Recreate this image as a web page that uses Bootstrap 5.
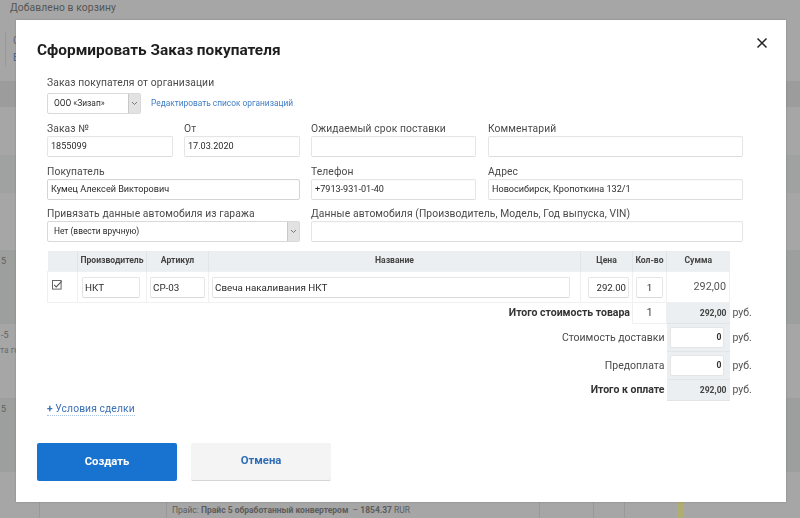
<!DOCTYPE html>
<html lang="ru">
<head>
<meta charset="utf-8">
<title>Сформировать Заказ покупателя</title>
<link href="https://cdn.jsdelivr.net/npm/bootstrap@5.3.0/dist/css/bootstrap.min.css" rel="stylesheet">
<style>
html,body{height:518px;overflow:hidden;}
body{font-family:Roboto,"Liberation Sans",sans-serif;background:#a6a6a6;color:#333;font-size:11px;}
.page-under{height:518px;display:flex;flex-direction:column;color:#555;}
.under-top{height:81px;padding:1px 10px;font-size:10.3px;line-height:14px;letter-spacing:.1px;}
.under-box{margin:17px 0 0 -5px;border-left:1px solid #999;padding-left:7px;height:35px;font-size:10px;line-height:17px;color:#666;}
.under-box span{display:block;}
.under-box .bl{color:#50688a;}
.under-band{flex:0 0 auto;color:#5f5f5f;font-size:9px;line-height:11px;padding:6px 0 0 1px;}
.under-band span{display:block;}
.under-band .sub{font-size:8.5px;margin-top:4px;margin-left:-1px;color:#6a6a6a;}
.b-dark{background:#9c9c9c;}
.b-mid{background:#a0a1a1;}
.b-green{background:#9c9f9e;}
.under-foot{flex:1 1 auto;display:flex;align-items:flex-end;}
.foot-line{display:flex;width:100%;height:16px;font-size:8.5px;line-height:16px;color:#5c5c5c;}
.fc{border-right:1px solid #999;flex:0 0 auto;}
.fy{background:#b0ad70;flex:0 0 7px;}
.overlay{position:fixed;inset:0;padding:20px 14px 16px 16px;}
.order-modal{height:482px;background:#fff;padding:21px 21px 21px;position:relative;border:0;border-radius:0;box-shadow:0 0 2px rgba(0,0,0,.2);}
.order-title{font-size:15.4px;font-weight:700;color:#1e1e1e;line-height:18px;margin:0;}
.close-x{position:absolute;top:17px;right:18px;width:12px;height:12px;padding:0;background:none;border:0;line-height:0;}
.order-form{padding:0 10px;}
.fld-label{display:block;font-size:10.3px;line-height:13px;color:#4a4a4a;letter-spacing:.1px;margin:0 0 1px;}
.fld{display:block;width:100%;height:21px;border:1px solid #e5e5e5;border-bottom-color:#dcdcdc;border-radius:2px;padding:0 3px;font:9.1px/19px Roboto,sans-serif;color:#2b2b2b;background:#fff;box-shadow:inset 0 1px 1px rgba(0,0,0,.02);}
.fld.strong{border-color:#d4d4d4;}
.pick{display:flex;height:21px;border:1px solid #d9d9d9;border-radius:2px;background:#fff;font-size:8.4px;line-height:19px;color:#2b2b2b;padding-left:6px;justify-content:space-between;}
.pick-arrow{width:12px;background:#e2e2e2;border-left:1px solid #c8c8c8;display:flex;align-items:center;justify-content:center;}
.form-grid{display:grid;grid-template-columns:126px 11px 116px 11px 165px 12px 255px;margin-top:8px;}
.g-2{grid-column:1/span 3}
.g-c1{grid-column:1}.g-c3{grid-column:3}.g-c5{grid-column:5}.g-c7{grid-column:7}
.g-wide{grid-column:5/span 3}
.grow{margin-bottom:7.5px;}
.org-head{padding-top:17px;}
.org-row{display:flex;align-items:center;gap:10px;}
.org-pick{width:94px;}
.org-link{font-size:8.35px;color:#3f7cc4;text-decoration:none;}
.items{table-layout:fixed;border-collapse:collapse;width:705px;margin:1px 0 0;}
.items th{background:#eceff1;height:21px;font-size:8.6px;font-weight:700;text-align:center;color:#444;padding:0;border-left:1px solid #e2e5e7;}
.items th:first-child{border-left:0;}
.items td{padding:0;font-size:10.5px;color:#4a4a4a;vertical-align:middle;}
.items .itm td{height:31px;border:1px solid #eef0f1;}
.cellin{display:block;height:21px;border:1px solid #e5e5e5;border-bottom-color:#d8d8d8;border-radius:2px;font-size:9.8px;line-height:19px;color:#2b2b2b;padding:0 2px;margin:0 3px;background:#fff;}
.m-maker{margin:0 6px 0 4px;}
.m-name{margin:0 10px 0 3px;}
.cellin.m-price{margin:0 3px 0 7px;font-size:9.6px;}
.cellin.r{text-align:right;}
.cellin.c{text-align:center;}
.chk-cell{padding-bottom:4px!important;}
.chk-box{display:block;margin-left:4px;}
.summ{text-align:right;padding-right:3px!important;font-size:10.8px!important;color:#555!important;}
.qty-cell{text-align:center;border:1px solid #eef0f1;font-size:11px!important;}
.tot-lab{text-align:right;padding-right:2px!important;}
.tot-lab b{color:#333;}
.tot-val{background:#eceff1;text-align:right;padding-right:3px!important;font-size:8.6px!important;font-weight:700;color:#444!important;border-bottom:1px solid #e2e5e7;}
.t-h1 td{height:21px;}.t-h2 td{height:28px;}.t-h3 td{height:21px;}
.tot-in{display:block;height:21px;background:#fff;border:1px solid #e5e5e5;border-radius:2px;margin:0 3px;text-align:right;line-height:19px;padding-right:1px;font-size:8.6px;color:#333;font-weight:700;}
.rub{padding-left:3px!important;font-size:10.5px;color:#555!important;}
.deal-link{display:inline-block;margin-top:-2px;font-size:10.3px;line-height:13px;letter-spacing:.1px;color:#3b70b5;text-decoration:none;border-bottom:1px dotted #a9c3e4;}
.deal-link b{font-weight:700;}
.modal-actions{position:absolute;left:21px;bottom:21px;display:flex;gap:14px;}
.act{width:140px;height:38px;border-radius:2px;font-size:11.3px;font-weight:700;padding:0;border:0;}
.act-go{background:#1872cf;color:#fff;}
.act-no{background:#f4f4f4;color:#2f6db5;border-bottom:1px solid #d5d5d5;}
</style>
</head>
<body>
<div class="page-under">
  <div class="under-top">Добавлено в корзину
    <div class="under-box"><span>С</span><span class="bl">Е</span></div>
  </div>
  <div class="under-band b-dark" style="height:26px"></div>
  <div class="under-band" style="height:48px"></div>
  <div class="under-band b-mid" style="height:38px"></div>
  <div class="under-band" style="height:57px"></div>
  <div class="under-band b-green" style="height:74px"><span>5</span></div>
  <div class="under-band" style="height:74px"><span>-5</span><span class="sub">та го</span></div>
  <div class="under-band b-green" style="height:74px"><span>5</span></div>
  <div class="under-foot">
    <div class="foot-line">
      <div class="fc" style="width:40px"></div>
      <div class="fc" style="width:127px"></div>
      <div class="fc" style="width:373px;padding-left:5px">Прайс: <b>Прайс 5 обработанный конвертером</b> &nbsp;– <b>1854.37</b> RUR</div>
      <div class="fc" style="width:54px"></div>
      <div class="fc" style="width:31px"></div>
      <div style="width:52px"></div>
      <div class="fy"></div>
    </div>
  </div>
</div>

<div class="overlay">
  <div class="order-modal">
    <h5 class="order-title">Сформировать Заказ покупателя</h5>
    <button class="close-x" type="button" aria-label="Закрыть">
      <svg width="12" height="12" viewBox="0 0 12 12"><path d="M1.5 1.5l9 9M10.5 1.5l-9 9" stroke="#222" stroke-width="1.5" fill="none"/></svg>
    </button>
    <div class="order-form">
      <div class="org-head">
        <label class="fld-label mb-1">Заказ покупателя от организации</label>
        <div class="org-row">
          <div class="pick org-pick"><span>ООО «Зизап»</span><span class="pick-arrow"><svg width="7" height="5" viewBox="0 0 7 5"><path d="M1 1l2.5 2.5L6 1" stroke="#777" fill="none"/></svg></span></div>
          <a class="org-link" href="#">Редактировать список организаций</a>
        </div>
      </div>
      <div class="form-grid">
        <div class="g-c1 grow"><label class="fld-label">Заказ №</label><div class="fld">1855099</div></div>
        <div class="g-c3 grow"><label class="fld-label">От</label><div class="fld">17.03.2020</div></div>
        <div class="g-c5 grow"><label class="fld-label">Ожидаемый срок поставки</label><div class="fld"></div></div>
        <div class="g-c7 grow"><label class="fld-label">Комментарий</label><div class="fld"></div></div>

        <div class="g-2 grow"><label class="fld-label">Покупатель</label><div class="fld strong">Кумец Алексей Викторович</div></div>
        <div class="g-c5 grow"><label class="fld-label">Телефон</label><div class="fld">+7913-931-01-40</div></div>
        <div class="g-c7 grow"><label class="fld-label">Адрес</label><div class="fld">Новосибирск, Кропоткина 132/1</div></div>

        <div class="g-2 grow"><label class="fld-label">Привязать данные автомобиля из гаража</label><div class="pick"><span>Нет (ввести вручную)</span><span class="pick-arrow"><svg width="7" height="5" viewBox="0 0 7 5"><path d="M1 1l2.5 2.5L6 1" stroke="#777" fill="none"/></svg></span></div></div>
        <div class="g-wide grow"><label class="fld-label">Данные автомобиля (Производитель, Модель, Год выпуска, VIN)</label><div class="fld"></div></div>
      </div>

      <table class="items">
        <colgroup><col style="width:30px"><col style="width:69px"><col style="width:62px"><col style="width:372px"><col style="width:52px"><col style="width:34px"><col style="width:63px"><col style="width:23px"></colgroup>
        <thead><tr><th></th><th>Производитель</th><th>Артикул</th><th>Название</th><th>Цена</th><th>Кол-во</th><th>Сумма</th></tr></thead>
        <tbody>
          <tr class="itm">
            <td class="chk-cell"><svg width="11" height="11" viewBox="0 0 11 11" class="chk-box"><rect x=".5" y=".5" width="8.6" height="8.6" fill="#fff" stroke="#666"/><path d="M2.2 4.8l2 2.2L9.6 1.4" stroke="#555" stroke-width="1.1" fill="none"/></svg></td>
            <td><span class="cellin m-maker">НКТ</span></td>
            <td><span class="cellin">СР-03</span></td>
            <td><span class="cellin m-name">Свеча накаливания НКТ</span></td>
            <td><span class="cellin r m-price">292.00</span></td>
            <td><span class="cellin c">1</span></td>
            <td class="summ">292,00</td>
          </tr>
          <tr class="t-h1">
            <td colspan="5" class="tot-lab"><b>Итого стоимость товара</b></td>
            <td class="qty-cell">1</td>
            <td class="tot-val">292,00</td>
            <td class="rub">руб.</td>
          </tr>
          <tr class="t-h2">
            <td colspan="6" class="tot-lab">Стоимость доставки</td>
            <td class="tot-val"><span class="tot-in">0</span></td>
            <td class="rub">руб.</td>
          </tr>
          <tr class="t-h2">
            <td colspan="6" class="tot-lab">Предоплата</td>
            <td class="tot-val"><span class="tot-in">0</span></td>
            <td class="rub">руб.</td>
          </tr>
          <tr class="t-h3">
            <td colspan="6" class="tot-lab"><b>Итого к оплате</b></td>
            <td class="tot-val">292,00</td>
            <td class="rub">руб.</td>
          </tr>
        </tbody>
      </table>
      <a class="deal-link" href="#"><b>+</b> Условия сделки</a>
    </div>
    <div class="modal-actions">
      <button class="act act-go" type="button">Создать</button>
      <button class="act act-no" type="button">Отмена</button>
    </div>
  </div>
</div>
<script src="https://cdn.jsdelivr.net/npm/bootstrap@5.3.0/dist/js/bootstrap.bundle.min.js"></script>
</body>
</html>
